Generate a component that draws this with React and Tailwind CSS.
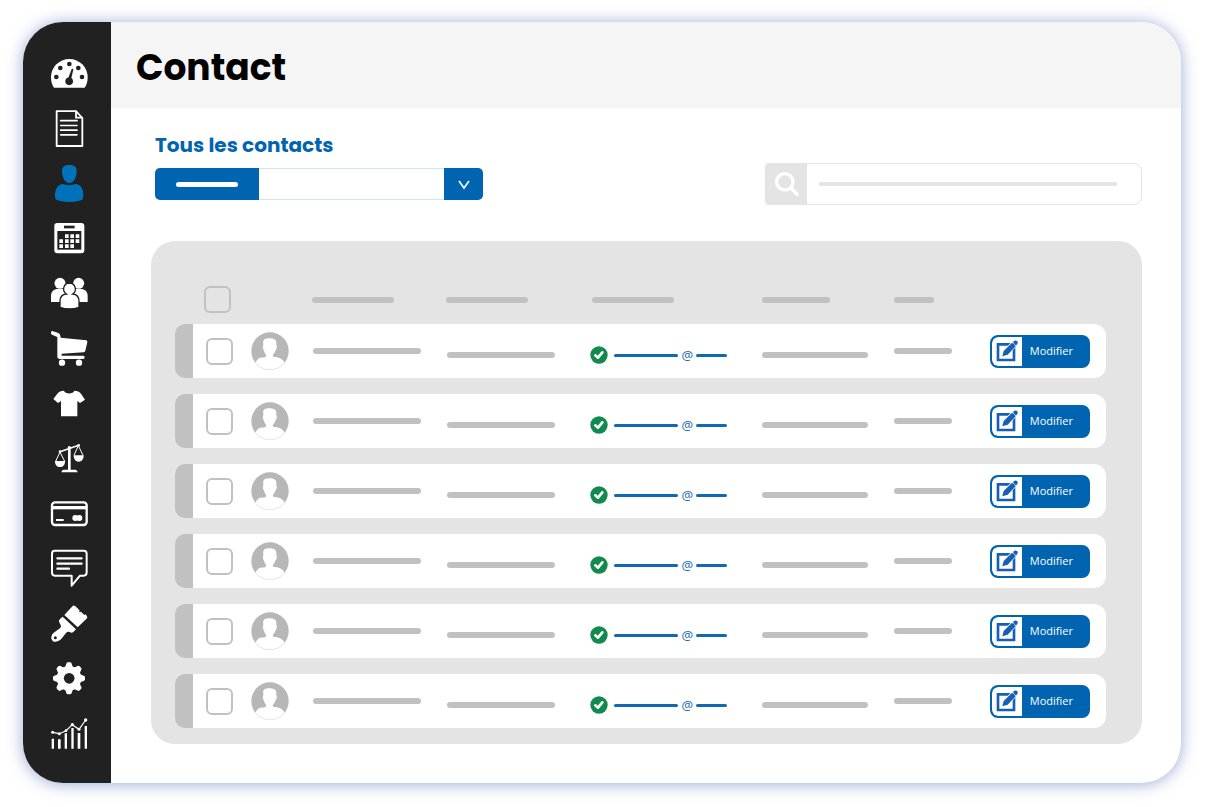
import React from "react";

const DARK = "#212121";

const NAV = [
  {
    label: "Tableau de bord",
    y: -12,
    art: (
      <>
        <path d="M42 113 C36 105 33 95 33 82 A55 55 0 0 1 143 82 C143 95 140 105 134 113 Z" fill="#fff" />
        <g fill={DARK}>
          <circle cx="88" cy="42" r="7" />
          <circle cx="61" cy="54" r="7" />
          <circle cx="115" cy="54" r="7" />
          <circle cx="49" cy="81" r="7" />
          <circle cx="126" cy="81" r="7" />
          <circle cx="87.500" cy="94" r="11.500" />
          <path d="M84 86 L95 57 Q98 55 100 59 L93 88 Z" />
        </g>
      </>
    ),
  },
  {
    label: "Documents",
    y: 153,
    art: (
      <g fill="none" stroke="#fff" strokeWidth="5.500" strokeLinejoin="round" strokeLinecap="round">
        <path d="M50 183.500 H108 L127 204 V288 H50 Z" />
        <path d="M108 184 V203 H126" />
        <path d="M62 212 H111 M62 226.500 H111 M62 240.500 H111 M62 254.500 H111" strokeWidth="5" />
      </g>
    ),
  },
  {
    label: "Contacts",
    y: 318,
    art: (
      <g fill="#0072bc">
        <path d="M88 345 C103 345 110 350 110 364 C110 383 101 399 88 399 C75 399 66 383 66 364 C66 350 73 345 88 345 Z" />
        <path d="M67 402 C75 402 80 406 88 406 C96 406 101 402 109 402 C123 404 130 419 130 434 C130 448 128 449 117 452 C98 457 78 457 59 452 C47 449 45 448 45 434 C45 419 53 404 67 402 Z" />
      </g>
    ),
  },
  {
    label: "Calendrier",
    y: 3,
    art: (
      <>
        <rect x="43" y="39" width="90" height="91" rx="9" fill="#fff" />
        <rect x="72" y="47" width="32" height="8" fill={DARK} />
        <rect x="52" y="63" width="72" height="56" fill={DARK} />
        <path
          fill="#fff"
          d="M75 73h11v11h-11z M91 73h11v11h-11z M107 73h11v11h-11z M58 88h11v11h-11z M75 88h11v11h-11z M91 88h11v11h-11z M107 88h11v11h-11z M58 103h11v11h-11z M75 103h11v11h-11z M91 103h11v11h-11z"
        />
      </>
    ),
  },
  {
    label: "Groupes",
    y: 168,
    art: (
      <g fill="#fff">
        <circle cx="60" cy="220" r="16.500" />
        <circle cx="116" cy="220" r="16.500" />
        <path d="M33 276 V258 C33 244 42 237 54 237 H66 C73 237 79 242 80 250 V276 Z" />
        <path d="M143 276 V258 C143 244 134 237 122 237 H110 C103 237 97 242 96 250 V276 Z" />
        <path
          d="M88 219 A18 18 0 0 1 98 252 C110 253 117 262 117 274 V292 C99 298 78 298 60 292 V274 C60 262 67 253 79 252 A18 18 0 0 1 88 219 Z"
          stroke={DARK}
          strokeWidth="4"
        />
      </g>
    ),
  },
  {
    label: "Commandes",
    y: 333,
    art: (
      <g fill="#fff">
        <path d="M37 363 L53 368 Q60 370 61 377 L62 383 L139 391 Q143 392 142 397 L136 422 Q135 426 131 427 L65 431 V437 H130 Q134 438 134 442 Q134 446 130 447 H58 Q52 446 52 441 V381 L36 374 Q32 372 33 367 Q34 363 37 363 Z" />
        <circle cx="66" cy="458" r="9.500" />
        <circle cx="117" cy="458" r="9.500" />
      </g>
    ),
  },
  {
    label: "Articles",
    y: 3,
    art: (
      <path
        fill="#fff"
        d="M72 47 C75 58 100 58 103 47 C112 47 119 50 123 56 L135 74 L120 84 L112 78 V124 H63 V78 L54 84 L40 72 L52 56 C56 50 63 47 72 47 Z"
      />
    ),
  },
  {
    label: "Juridique",
    y: 168,
    art: (
      <>
        <g fill="none" stroke="#fff" strokeWidth="3" strokeLinejoin="round">
          <path d="M60 230 L116 211" strokeWidth="4.500" />
          <path d="M60 231 L47 259 M60 231 L74 259 M115 212 L102 241 M115 212 L129 241" />
        </g>
        <g fill="#fff">
          <path d="M84 217 H92 V284 H106 Q112 285 113 292 H64 Q65 285 71 284 H84 Z" />
          <circle cx="88" cy="218" r="5" />
          <circle cx="60" cy="230" r="4" />
          <circle cx="116" cy="211" r="4" />
          <path d="M45 258 H75 C75 270 69 276 60 276 C51 276 45 270 45 258 Z" />
          <path d="M101 241 H131 C131 253 125 260 116 260 C107 260 101 253 101 241 Z" />
        </g>
      </>
    ),
  },
  {
    label: "Paiements",
    y: 333,
    art: (
      <>
        <rect x="36" y="382" width="104" height="68" rx="9" fill="none" stroke="#fff" strokeWidth="7" />
        <rect x="38" y="393" width="100" height="10" fill="#fff" />
        <rect x="48" y="432" width="23" height="6" fill="#fff" />
        <circle cx="106" cy="429" r="9" fill="#fff" />
        <circle cx="118" cy="429" r="9" fill="#fff" />
      </>
    ),
  },
  {
    label: "Messages",
    y: 18,
    art: (
      <g fill="none" stroke="#fff" strokeWidth="6" strokeLinejoin="round" strokeLinecap="round">
        <path d="M44 47 H131 Q140 47 140 56 V112 Q140 122 131 122 H120 L95 152 V122 H44 Q36 122 36 112 V56 Q36 47 44 47 Z" />
        <path d="M52 70 H125 M52 86 H125 M52 101 H87" strokeWidth="6.500" />
      </g>
    ),
  },
  {
    label: "Apparence",
    y: 183,
    art: (
      <g>
        <path
          fill="#fff"
          d="M98 213 Q102 210 106 214 L115 222 L119 227 L117 232 L123 230 L133 240 L137 238 L142 246 Q142 250 138 253 L113 277 L73 240 Z"
        />
        <path
          fill="#fff"
          d="M68 245 L108 283 L100 291 Q95 295 89 291 Q83 288 78 294 L63 313 Q54 322 42 320 Q33 316 34 305 Q35 297 43 292 L60 280 Q65 276 62 270 L57 260 Q56 255 60 252 Z"
        />
        <circle cx="46" cy="308" r="4.500" fill={DARK} />
      </g>
    ),
  },
  {
    label: "Paramètres",
    y: 18,
    art: (
      <>
        <g fill="#fff">
          <circle cx="87" cy="100" r="37" />
          {[0, 45, 90, 135, 180, 225, 270, 315].map((a) => (
            <path key={a} d="M75 67 L79 56 Q80 52 84 52 H90 Q94 52 95 56 L99 67 Z" transform={`rotate(${a} 87 100)`} />
          ))}
        </g>
        <circle cx="87.500" cy="100" r="16" fill={DARK} />
      </>
    ),
  },
  {
    label: "Statistiques",
    y: 183,
    art: (
      <g fill="#fff">
        <path d="M35 281h7v30h-7z M54 283h8v28h-8z M74 265h7v46h-7z M94 249h7v62h-7z M113 264h8v47h-8z M134 243h7v68h-7z" />
        <path d="M38 262 L58 266 L78 257 L97 239 L117 253 L137 225" fill="none" stroke="#fff" strokeWidth="3.500" />
        <circle cx="38" cy="262" r="4.500" />
        <circle cx="58" cy="266" r="4.500" />
        <circle cx="78" cy="257" r="4" />
        <circle cx="97" cy="239" r="5" />
        <circle cx="117" cy="253" r="4.500" />
        <circle cx="137" cy="225" r="5" />
      </g>
    ),
  },
];

const ROWS = [1, 2, 3, 4, 5, 6];

function Bar({ className }) {
  return <span className={`block h-1.5 rounded-full bg-[#c1c1c1] ${className}`} />;
}

function Checkbox({ label }) {
  return (
    <input
      type="checkbox"
      aria-label={label}
      className="block size-[27px] shrink-0 appearance-none rounded-md border-2 border-[#c1c1c1] checked:bg-[#0064b1]"
    />
  );
}

function Avatar() {
  return (
    <svg viewBox="272 188 116 116" className="block size-[38px] shrink-0" aria-hidden="true">
      <clipPath id="avatar-disc">
        <circle cx="330" cy="246" r="57" />
      </clipPath>
      <circle cx="330" cy="246" r="57" fill="#b7b7b7" />
      <path
        clipPath="url(#avatar-disc)"
        fill="#fff"
        d="M313 210 Q320 206 330 207 Q338 207 343 210 Q351 212 349 226 L351 234 Q350 243 346 246 Q343 255 339 258 V263 Q341 265 352 265 Q364 267 371 276 L378 290 C360 312 300 312 281 288 L288 277 Q294 267 306 266 Q317 266 318 262 V258 Q313 253 312 246 Q308 242 308 233 L310 226 Q307 214 313 210 Z"
      />
      <path d="M288 284 A57 57 0 0 0 372 284" fill="none" stroke="#ddd" strokeWidth="1.500" transform="translate(0 1)" />
    </svg>
  );
}

function Cell({ className = "", children }) {
  return (
    <td className="p-0 pb-4">
      <div className={`flex h-[54px] items-center bg-white ${className}`}>{children}</div>
    </td>
  );
}

function ContactRow({ index }) {
  return (
    <tr>
      <td className="p-0 pb-4">
        <div className="h-[54px] rounded-l-[10px] bg-[#c1c1c1]" />
      </td>
      <Cell className="pl-[13px]">
        <Checkbox label={`Sélectionner le contact ${index}`} />
      </Cell>
      <Cell>
        <Avatar />
      </Cell>
      <Cell className="pl-px">
        <Bar className="w-[108px]" />
      </Cell>
      <Cell className="pt-2 pl-px">
        <Bar className="w-[108px]" />
      </Cell>
      <Cell className="pt-2 text-[#0f69b4]">
        <svg viewBox="0 0 54 54" className="size-[18px] shrink-0" aria-hidden="true">
          <circle cx="27" cy="27" r="26" fill="#128a4f" />
          <path d="M16 28 L24 35 L37 19" fill="none" stroke="#fff" strokeWidth="8" strokeLinejoin="round" strokeLinecap="round" />
        </svg>
        <span className="ml-1.5 h-[3px] w-16 shrink-0 rounded-full bg-[#0f69b4]" />
        <span className="w-[18px] shrink-0 text-center font-['Open_Sans',sans-serif] text-[13px] leading-4">@</span>
        <span className="h-[3px] w-[31px] shrink-0 rounded-full bg-[#0f69b4]" />
      </Cell>
      <Cell className="pt-2">
        <Bar className="w-[106px]" />
      </Cell>
      <Cell>
        <Bar className="w-[58px]" />
      </Cell>
      <Cell className="rounded-r-xl">
        <button
          type="button"
          className="flex h-[33px] w-[100px] items-center overflow-hidden rounded-lg border-2 border-[#0064b1] bg-[#0064b1] text-white"
        >
          <span className="flex h-full w-[30px] shrink-0 items-center justify-center rounded-l-md bg-white">
            <svg viewBox="350 180 66 66" className="size-[22px]" aria-hidden="true">
              <path d="M356 193 H404 V240 H356 Z" fill="none" stroke="#1560b4" strokeWidth="8" />
              <path d="M374 225 L377 212 L402 185 L411 194 L385 221 Z" fill="#1560b4" stroke="#fff" strokeWidth="7" />
              <path d="M369 229 L373 213 L398 188 L409 199 L385 224 Z" fill="#1560b4" />
              <path d="M401 187 L404 183 Q409 179 414 184 Q417 189 413 193 L410 197 Z" fill="#1560b4" />
            </svg>
          </span>
          <span className="pl-2 font-['Open_Sans',sans-serif] text-[11px] leading-4 font-medium">Modifier</span>
        </button>
      </Cell>
    </tr>
  );
}

export default function App() {
  return (
    <div className="flex min-h-screen bg-white pt-[22px] pr-6 pb-6 pl-[23px] font-['Poppins','Inter',sans-serif]">
      <div className="flex flex-1 overflow-hidden rounded-[40px] bg-white shadow-[0_1px_16px_rgba(50,85,170,0.5)]">
        <nav aria-label="Navigation principale" className="flex w-[88px] shrink-0 flex-col items-center bg-[#212121] pt-6">
          {NAV.map((item) => (
            <a key={item.label} href="#" aria-label={item.label} className="block">
              <svg viewBox={`-9 ${item.y} 180 165`} className="block h-[55px] w-[60px]" aria-hidden="true">
                {item.art}
              </svg>
            </a>
          ))}
        </nav>

        <div className="flex min-w-0 flex-1 flex-col">
          <header className="flex h-[86px] items-center bg-[#f5f5f5] pt-1.5 pl-[25px]">
            <h1 className="text-[36px] leading-[48px] font-bold text-black">Contact</h1>
          </header>

          <main className="flex-1 pt-[25px] pr-[39px] pb-9 pl-10">
            <div className="flex items-end justify-between gap-6">
              <div className="pb-[5px] pl-1">
                <label htmlFor="contact-filter" className="block text-[20px] leading-6 font-bold text-[#0064b1]">
                  Tous les contacts
                </label>
                <div className="mt-[11px] flex h-8 w-[328px] overflow-hidden rounded-[5px]">
                  <button
                    type="button"
                    aria-label="Filtrer"
                    className="flex w-[104px] shrink-0 items-center justify-center bg-[#0064b1]"
                  >
                    <span className="h-[5px] w-[62px] rounded-full bg-white" />
                  </button>
                  <div className="relative min-w-0 flex-1">
                    <select
                      id="contact-filter"
                      className="h-full w-full appearance-none border-y border-[#cde6f5] bg-white pr-12 pl-3 text-sm"
                    >
                      <option value=""></option>
                    </select>
                    <span className="pointer-events-none absolute inset-y-0 right-0 flex w-[39px] items-center justify-center bg-[#0064b1]">
                      <svg viewBox="0 0 12 12" className="mt-0.5 size-3" aria-hidden="true">
                        <path d="M1 2 L6 9 L11 2" fill="none" stroke="#fff" strokeWidth="1.600" />
                      </svg>
                    </span>
                  </div>
                </div>
              </div>

              <div className="flex h-[42px] w-[377px] overflow-hidden rounded-lg rounded-l-[3px] border border-[#e4e4e4]">
                <button type="button" aria-label="Rechercher" className="flex w-[41px] shrink-0 items-center justify-center bg-[#e4e4e4]">
                  <svg viewBox="0 0 24 24" className="size-6" aria-hidden="true">
                    <circle cx="9.800" cy="9.800" r="8.200" fill="none" stroke="#fff" strokeWidth="3.200" />
                    <path d="M16 16 L22 22.200" stroke="#fff" strokeWidth="3.600" strokeLinecap="round" />
                  </svg>
                </button>
                <div className="relative min-w-0 flex-1">
                  <input type="text" aria-label="Rechercher un contact" className="h-full w-full px-3 text-sm outline-none" />
                  <span className="pointer-events-none absolute inset-x-0 inset-y-0 flex items-center pr-6 pl-3">
                    <span className="h-1 w-full rounded-sm bg-[#e4e4e4]" />
                  </span>
                </div>
              </div>
            </div>

            <section aria-label="Liste des contacts" className="mt-9 rounded-3xl bg-[#e4e4e4] pt-[45px] pr-9 pl-6">
              <table className="w-full table-fixed border-collapse">
                <colgroup>
                  <col className="w-[18px]" />
                  <col className="w-[58px]" />
                  <col className="w-[61px]" />
                  <col className="w-[134px]" />
                  <col className="w-[144px]" />
                  <col className="w-[171px]" />
                  <col className="w-[132px]" />
                  <col className="w-[96px]" />
                  <col className="w-[116px]" />
                </colgroup>
                <thead>
                  <tr>
                    <td className="p-0" />
                    <th className="p-0 pb-[11px] pl-[11px]">
                      <Checkbox label="Sélectionner tous les contacts" />
                    </th>
                    <td className="p-0" />
                    <th className="p-0 pb-[11px]">
                      <Bar className="w-[82px]" />
                    </th>
                    <th className="p-0 pb-[11px]">
                      <Bar className="w-[82px]" />
                    </th>
                    <th className="p-0 pb-[11px] pl-0.5">
                      <Bar className="w-[82px]" />
                    </th>
                    <th className="p-0 pb-[11px]">
                      <Bar className="w-[68px]" />
                    </th>
                    <th className="p-0 pb-[11px]">
                      <Bar className="w-10" />
                    </th>
                    <td className="p-0" />
                  </tr>
                </thead>
                <tbody>
                  {ROWS.map((n) => (
                    <ContactRow key={n} index={n} />
                  ))}
                </tbody>
              </table>
            </section>
          </main>
        </div>
      </div>
    </div>
  );
}
